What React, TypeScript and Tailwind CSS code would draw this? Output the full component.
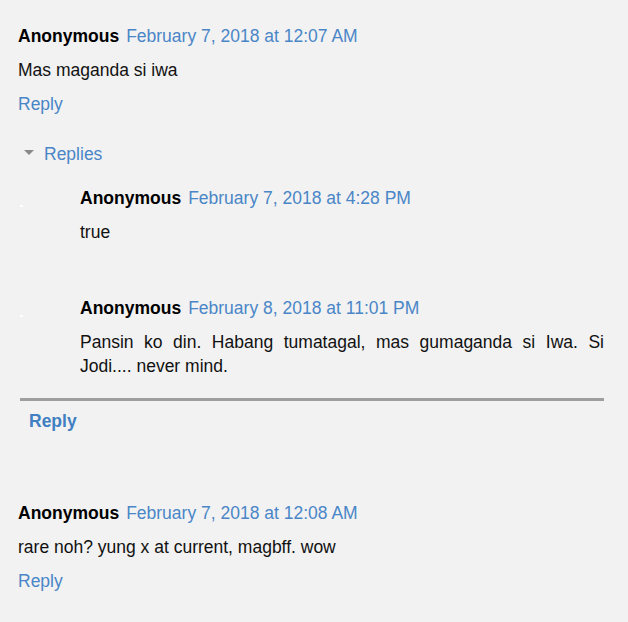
import React from 'react';

const link = 'text-[#4a86c7]';

const Header: React.FC<{ date: string }> = ({ date }) => (
  <div className="h-6 leading-6 flex gap-[7px]">
    <span className="font-bold text-black">Anonymous</span>
    <span className={link}>{date}</span>
  </div>
);

const App: React.FC = () => {
  return (
    <div className="min-h-[622px] bg-[#f2f2f2] text-[17.5px] text-[#111] font-['Liberation_Sans',Arial,sans-serif] px-[18px] pt-6">
      {/* first thread */}
      <Header date="February 7, 2018 at 12:07 AM" />
      <p className="mt-[10px] h-6 leading-6">Mas maganda si iwa</p>
      <div className={`mt-[10px] h-6 leading-6 ${link}`}>Reply</div>

      <div className={`mt-[26px] h-6 leading-6 flex items-center ${link}`}>
        <span className="ml-[6px] mr-[10px] w-0 h-0 border-x-[5px] border-x-transparent border-t-[5px] border-t-[#8a8a8a] mb-[3px]" />
        Replies
      </div>

      <div className="mt-5 pl-[2px]">
        <div className="flex">
          <div className="w-[60px] shrink-0 relative">
            <span className="absolute left-0 top-[19px] w-[3px] h-[2px] bg-white" />
          </div>
          <div className="flex-1 mr-[4px]">
            <Header date="February 7, 2018 at 4:28 PM" />
            <p className="mt-[10px] h-6 leading-6">true</p>
          </div>
        </div>

        <div className="flex mt-[52px]">
          <div className="w-[60px] shrink-0 relative">
            <span className="absolute left-0 top-[19px] w-[3px] h-[2px] bg-white" />
          </div>
          <div className="flex-1 mr-[6px]">
            <Header date="February 8, 2018 at 11:01 PM" />
            <p className="mt-[10px] leading-6 text-justify">
              Pansin ko din. Habang tumatagal, mas gumaganda si Iwa. Si Jodi.... never mind.
            </p>
          </div>
        </div>

        <div className="mt-5 mr-[6px] border-t-[3px] border-[#9e9e9e]" />
        <div className="mt-2 pl-[9px] h-6 leading-6 font-bold text-[#3f7fc2]">Reply</div>
      </div>

      {/* second thread */}
      <div className="mt-[68px]">
        <Header date="February 7, 2018 at 12:08 AM" />
        <p className="mt-[10px] h-6 leading-6">rare noh? yung x at current, magbff. wow</p>
        <div className={`mt-[10px] h-6 leading-6 ${link}`}>Reply</div>
      </div>
    </div>
  );
};

export default App;
